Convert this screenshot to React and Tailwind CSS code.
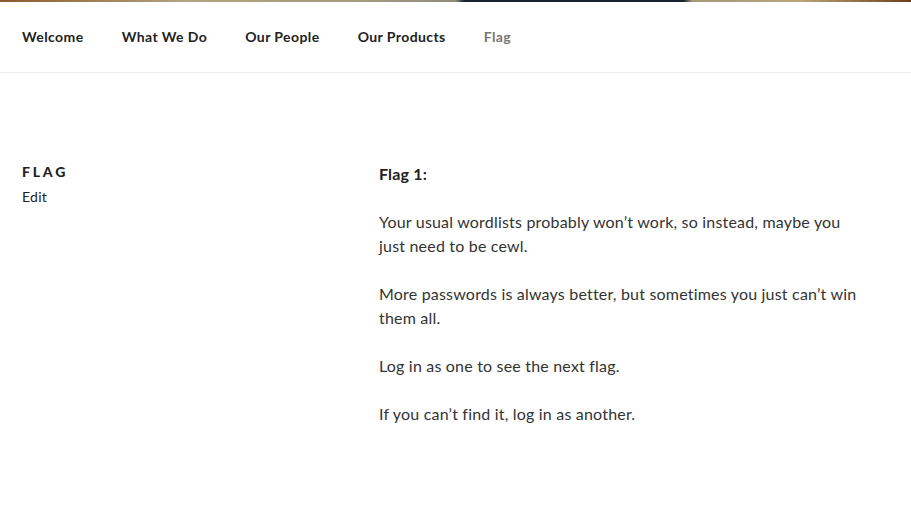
const navItems = ['Welcome', 'What We Do', 'Our People', 'Our Products'];

export default function App() {
  return (
    <div className="min-h-screen bg-white text-[#333]" style={{ fontFamily: 'Lato, "Liberation Sans", sans-serif' }}>
      {/* header image strip */}
      <div className="h-[2px] w-full bg-[linear-gradient(90deg,#8a5a2b_0%,#b3a27f_20%,#a49a80_40%,#8f8d78_50%,#1b2230_51%,#1a2030_75%,#a89878_76%,#b9a37a_88%,#6b3f1c_100%)]" />

      {/* nav */}
      <nav className="h-[71px] border-b border-[#eee] flex items-center px-[3px]">
        {navItems.map(item => (
          <a key={item} className="px-[19px] text-[14px] font-bold text-[#222] leading-none tracking-[0.03em]">{item}</a>
        ))}
        <a className="px-[19px] text-[14px] font-bold text-[#767676] leading-none tracking-[0.03em]">Flag</a>
      </nav>

      {/* content */}
      <div className="flex pt-[89px] px-[22px]">
        <header className="w-[357px] shrink-0">
          <h2 className="text-[14px] font-black uppercase tracking-[0.2em] text-[#222] leading-[18px] pt-[1px]">Flag</h2>
          <p className="text-[14px] text-[#222] mt-[7px] leading-[18px] tracking-[0.02em]">Edit</p>
        </header>
        <div className="w-[484px] text-[16px] leading-[24px] text-[#333] tracking-[0.012em]">
          <p className="font-bold text-[#222] mb-[24px]">Flag 1:</p>
          <p className="mb-[24px]">Your usual wordlists probably won’t work, so instead, maybe you just need to be cewl.</p>
          <p className="mb-[24px]">More passwords is always better, but sometimes you just can’t win them all.</p>
          <p className="mb-[24px]">Log in as one to see the next flag.</p>
          <p>If you can’t find it, log in as another.</p>
        </div>
      </div>
    </div>
  );
}
